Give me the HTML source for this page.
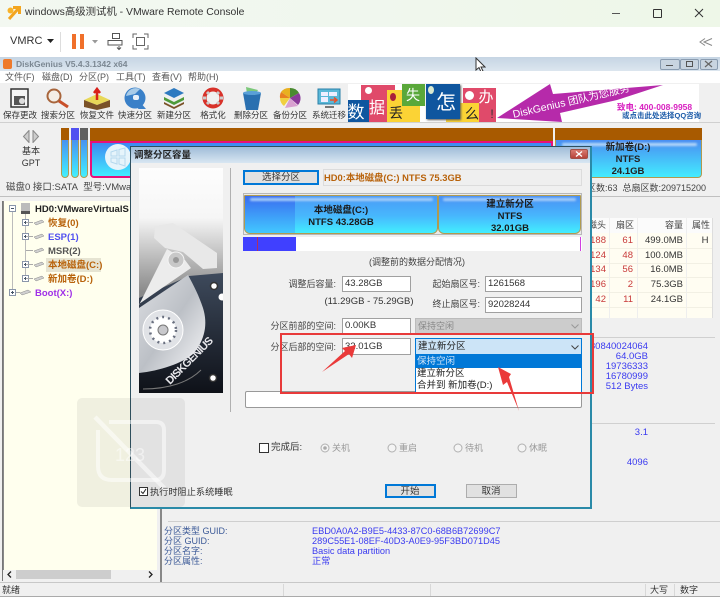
<!DOCTYPE html>
<html lang="zh"><head><meta charset="utf-8"><title>windows高级测试机 - VMware Remote Console</title>
<style>
html,body{margin:0;padding:0;background:#fff}
#r{position:relative;width:720px;height:597px;overflow:hidden;background:#f0f0f0;font-family:"Liberation Sans","Noto Sans CJK SC",sans-serif;font-size:9.5px;color:#222;filter:blur(.3px)}
#r div,#r span.a,#r svg{position:absolute}
.t{position:absolute;white-space:nowrap;line-height:12px;height:12px}
.c{transform:translateX(-50%);text-align:center}
.rt{transform:translateX(-100%);text-align:right}
.b{font-weight:bold}
.in{background:#fff;border:1px solid #a0a0a0;box-sizing:border-box;line-height:14px;padding-left:2px;white-space:nowrap;color:#333}
.blue{color:#3a3af0}
.red{color:#c83a3a}
</style></head><body><div id="r">

<!-- window title -->
<div style="left:0;top:0;width:720px;height:27px;background:linear-gradient(90deg,#f3f8f1,#f0f7ee 50%,#eef7e8)"></div>
<svg style="left:6px;top:5px" width="16" height="16" viewBox="0 0 16 16"><circle cx="4.500" cy="5.500" r="3" fill="#f7b22a"/><path d="M3 14 12 4M7 2.500H13.500V9" stroke="#f3a51f" stroke-width="3" fill="none"/></svg>
<span class="t" style="left:25px;top:6px;font-size:10.400px;line-height:14px;height:14px;color:#333">windows高级测试机 - VMware Remote Console</span>
<div style="left:612px;top:13px;width:8px;height:1px;background:#555"></div>
<div style="left:653px;top:9px;width:7px;height:7px;border:1px solid #333;border-radius:1px"></div>
<svg style="left:694px;top:8px" width="10" height="10"><path d="M1 1 9 9M9 1 1 9" stroke="#333" stroke-width="1"/></svg>

<!-- vmrc toolbar -->
<div style="left:0;top:27px;width:720px;height:30px;background:#fff"></div>
<span class="t" style="left:10px;top:34px;font-size:11px;line-height:14px;height:14px;color:#333">VMRC</span>
<svg style="left:47px;top:39px" width="7" height="4"><path d="M0 0H7L3.500 4Z" fill="#222"/></svg>
<div style="left:60px;top:32px;width:1px;height:20px;background:#ddd"></div>
<div style="left:72px;top:34px;width:4px;height:15px;background:#f0702a"></div>
<div style="left:80px;top:34px;width:4px;height:15px;background:#f0702a"></div>
<svg style="left:92px;top:40px" width="6" height="4"><path d="M0 0H6L3 3.500Z" fill="#999"/></svg>
<svg style="left:107px;top:33px" width="18" height="18" fill="none" stroke="#555" stroke-width="1"><rect x="5.500" y=".5" width="7" height="5"/><rect x="1" y="7.500" width="14" height="4.500"/><path d="M12 13V16M10 14.500 12 16.500 14 14.500"/></svg>
<svg style="left:132px;top:33px" width="18" height="18" fill="none" stroke="#666" stroke-width="1"><path d="M1 5V1H5M12 1H16V5M16 12V16H12M5 16H1V12"/><rect x="4.500" y="4.500" width="8" height="8"/></svg>
<svg style="left:699px;top:38px" width="14" height="8" fill="none" stroke="#888" stroke-width="1"><path d="M6 .5 1 4 6 7.500M13 .5 5 4 13 7.500"/></svg>

<!-- DG title -->
<div style="left:0;top:57px;width:720px;height:14px;background:linear-gradient(#c6d5e4,#dce6ef)"></div>
<div style="left:3px;top:59px;width:9px;height:10px;background:#ee7a2c;border-radius:2px"></div>
<span class="t b" style="left:16px;top:58px;font-size:8.500px;color:#7b8792">DiskGenius V5.4.3.1342 x64</span>
<div style="left:660px;top:59px;width:18px;height:9px;background:#c8d4e0;border:1px solid #8a9cb0;border-radius:2px"></div>
<div style="left:680px;top:59px;width:17px;height:9px;background:#c8d4e0;border:1px solid #8a9cb0;border-radius:2px"></div>
<div style="left:700px;top:59px;width:16px;height:9px;background:#c8d4e0;border:1px solid #8a9cb0;border-radius:2px"></div>
<div style="left:666px;top:65px;width:7px;height:1px;background:#555"></div>
<div style="left:686px;top:61px;width:5px;height:4px;border:1px solid #555"></div>
<svg style="left:704px;top:60px" width="9" height="8"><path d="M1 1 8 7M8 1 1 7" stroke="#666" stroke-width="1.200"/></svg>
<svg style="left:475px;top:57px" width="11" height="16"><path d="M1 1V13L4 10.500 6 15 8 14 6 10H10Z" fill="#fff" stroke="#333" stroke-width="1"/></svg>

<!-- menu -->
<div style="left:0;top:71px;width:720px;height:12px;background:#fff"></div>
<span class="t" style="left:5px;top:71px;font-size:9px;color:#555">文件(F)</span>
<span class="t" style="left:42px;top:71px;font-size:9px;color:#555">磁盘(D)</span>
<span class="t" style="left:79px;top:71px;font-size:9px;color:#555">分区(P)</span>
<span class="t" style="left:116px;top:71px;font-size:9px;color:#555">工具(T)</span>
<span class="t" style="left:152px;top:71px;font-size:9px;color:#555">查看(V)</span>
<span class="t" style="left:188px;top:71px;font-size:9px;color:#555">帮助(H)</span>

<!-- toolbar -->
<div style="left:0;top:83px;width:720px;height:40px;background:#f0f0f0;border-bottom:1px solid #d0d0d0;box-sizing:border-box"></div>
<svg style="left:0;top:84px" width="348" height="26" viewBox="0 0 348 26">
 <rect x="11" y="5" width="17" height="18" fill="#f4f4f4" stroke="#333" stroke-width="1.500"/><rect x="14" y="12" width="11" height="9" fill="#555"/><circle cx="22" cy="17" r="3" fill="#ddd"/>
 <circle cx="54" cy="12" r="6.500" fill="#f4eee6" stroke="#a8653c" stroke-width="2"/><path d="M59 17 68 23" stroke="#c8502a" stroke-width="3"/>
 <path d="M84 16 97 10 110 16 97 21Z" fill="#e8d858"/><path d="M84 16V23L97 26 110 23V16L97 21Z" fill="#7a5228"/><path d="M97 16V8M94 9 97 5 100 9" stroke="#d8201a" stroke-width="2.500" fill="#d8201a"/>
 <circle cx="135" cy="14" r="10.500" fill="#3a80c8"/><path d="M126 12A10 10 0 0 1 140 5L135 10Z" fill="#a8cbe8"/><rect x="133" y="11" width="6" height="5" rx="2" fill="#e8f0f8"/><path d="M140 18 146 25H138Z" fill="#3a80c8"/>
 <path d="M164 9 174 4 184 9 174 14Z" fill="#2e7ac0"/><path d="M164 13 174 18 184 13 184 16 174 21 164 16Z" fill="#4e9a3a"/><path d="M164 18 174 23 184 18 184 20 174 25 164 20Z" fill="#7a5228"/>
 <circle cx="213" cy="14" r="8.500" fill="none" stroke="#d8322a" stroke-width="4"/><path d="M207 8 209 10M219 8 217 10M207 20 209 18M219 20 217 18M203 14H206M220 14H223" stroke="#ccc" stroke-width="3"/>
 <path d="M243 9H261L258 26H246Z" fill="#2a70b0"/><path d="M246 3 258 6 255 11 247 10Z" fill="#7cc87a"/><ellipse cx="252" cy="9" rx="9" ry="2" fill="#5aa0d8"/>
 <path d="M290 14V4A10 10 0 0 1 299 9Z" fill="#4a8a30"/><path d="M290 14 281 8A10 10 0 0 1 290 4Z" fill="#e8b020"/><path d="M290 14H280A10 10 0 0 1 281 8Z" fill="#e88020"/><path d="M290 14 284 22A10 10 0 0 1 280 14Z" fill="#f0d040"/><path d="M290 14 298 22 285 24Z" fill="#d8a0d0"/><path d="M290 14 299 9A10 10 0 0 1 298 21Z" fill="#8a3a9a"/>
 <rect x="318" y="5" width="22" height="15" fill="#5ab8d8" stroke="#2a80a8"/><rect x="321" y="8" width="7" height="4" fill="#eef"/><rect x="329" y="8" width="8" height="4" fill="#eef"/><rect x="321" y="13" width="7" height="5" fill="#eef"/><path d="M330 16H336M334 13.500 337 16 334 18.500" stroke="#e8502a" stroke-width="1.500" fill="none"/><path d="M325 23H334" stroke="#777" stroke-width="2"/>
</svg>
<span class="t c" style="left:20px;top:109px;font-size:8.500px;color:#333">保存更改</span>
<span class="t c" style="left:58px;top:109px;font-size:8.500px;color:#333">搜索分区</span>
<span class="t c" style="left:97px;top:109px;font-size:8.500px;color:#333">恢复文件</span>
<span class="t c" style="left:135px;top:109px;font-size:8.500px;color:#333">快速分区</span>
<span class="t c" style="left:174px;top:109px;font-size:8.500px;color:#333">新建分区</span>
<span class="t c" style="left:213px;top:109px;font-size:8.500px;color:#333">格式化</span>
<span class="t c" style="left:251px;top:109px;font-size:8.500px;color:#333">删除分区</span>
<span class="t c" style="left:290px;top:109px;font-size:8.500px;color:#333">备份分区</span>
<span class="t c" style="left:329px;top:109px;font-size:8.500px;color:#333">系统迁移</span>

<!-- banner -->
<div style="left:348px;top:84px;width:351px;height:38px;background:#fff;overflow:hidden">
 <div style="left:13px;top:1px;width:34px;height:37px;background:#e04a6a"></div>
 <div style="left:17px;top:3px;width:7px;height:7px;background:#fff;border-radius:50%"></div>
 <div style="left:0;top:16px;width:21px;height:22px;background:#0f569f"></div>
 <span class="t c" style="left:8px;top:19px;font-size:17px;line-height:20px;height:20px;color:#fff">数</span>
 <span class="t c" style="left:29px;top:15px;font-size:16px;line-height:20px;height:20px;color:#fff">据</span>
 <div style="left:39px;top:6px;width:33px;height:32px;background:#fbd335"></div>
 <div style="left:42px;top:9px;width:6px;height:8px;background:#a8203a;border-radius:50%"></div>
 <span class="t c" style="left:48px;top:20px;font-size:14px;line-height:18px;height:18px;color:#222">丢</span>
 <div style="left:54px;top:0;width:23px;height:22px;background:#5aa83a"></div>
 <span class="t c" style="left:65px;top:2px;font-size:14px;line-height:18px;height:18px;color:#fff">失</span>
 <div style="left:115px;top:4px;width:33px;height:34px;background:#e04a6a"></div>
 <div style="left:98px;top:19px;width:33px;height:19px;background:#fbd335"></div>
 <div style="left:78px;top:0;width:34px;height:35px;background:#0f569f;box-shadow:1px 1px 2px #555"></div>
 <div style="left:80px;top:2px;width:6px;height:8px;background:#d8e8d0;border-radius:50%"></div>
 <span class="t c" style="left:98px;top:7px;font-size:20px;line-height:24px;height:24px;color:#fff">怎</span>
 <span class="t c" style="left:124px;top:21px;font-size:14px;line-height:18px;height:18px;color:#222">么</span>
 <div style="left:117px;top:7px;width:9px;height:9px;background:#fff;border-radius:50%"></div>
 <span class="t c" style="left:138px;top:5px;font-size:15px;line-height:18px;height:18px;color:#fff">办</span>
 <span class="t c" style="left:144px;top:23px;font-size:12px;line-height:14px;height:14px;color:#333">!</span>
</div>
<svg style="left:490px;top:84px" width="180" height="38"><path d="M7 34 60 0 63 10 173 1 127 16 70 29 72 38Z" fill="#b62aaa"/></svg>
<span class="t" style="left:513px;top:109px;font-size:10.500px;color:#fff;transform:rotate(-13deg);transform-origin:0 50%">DiskGenius 团队为您服务</span>
<span class="t b" style="left:617px;top:101px;font-size:8.500px;color:#d820c0">致电: 400-008-9958</span>
<span class="t b" style="left:622px;top:110px;font-size:7.500px;color:#1a5aa8">或点击此处选择QQ咨询</span>

<!-- disk bar -->
<svg style="left:22px;top:130px" width="18" height="13" fill="#ccc" stroke="#888"><path d="M7 .5 1.500 6.500 7 12.500V.5ZM11 .5 16.500 6.500 11 12.500Z"/></svg>
<span class="t c" style="left:31px;top:145px;font-size:9px;color:#333">基本</span>
<span class="t c" style="left:31px;top:157px;font-size:9px;color:#333">GPT</span>
<div style="left:61px;top:128px;width:8px;height:50px;border-radius:2px 2px 4px 4px;background:linear-gradient(#4a8ff0 20%,#40f0ff);border:1px solid #b09a50;box-sizing:border-box"></div>
<div style="left:61px;top:128px;width:8px;height:12px;background:#a85a00"></div>
<div style="left:71px;top:128px;width:8px;height:50px;border-radius:2px 2px 4px 4px;background:linear-gradient(#4a8ff0 20%,#40f0ff);border:1px solid #b09a50;box-sizing:border-box"></div>
<div style="left:71px;top:128px;width:8px;height:12px;background:#5050f0"></div>
<div style="left:80px;top:128px;width:8px;height:50px;border-radius:2px 2px 4px 4px;background:linear-gradient(#4a8ff0 20%,#40f0ff);border:1px solid #b09a50;box-sizing:border-box"></div>
<div style="left:80px;top:128px;width:8px;height:12px;background:#606060"></div>
<div style="left:90px;top:128px;width:463px;height:13px;background:#a85a00"></div>
<div style="left:90px;top:141px;width:463px;height:37px;box-sizing:border-box;border:2px solid #e8107a;background:linear-gradient(#3d88f2,#43ecff);border-radius:0 0 4px 4px"></div>
<svg style="left:104px;top:143px" width="28" height="28"><circle cx="14" cy="14" r="13" fill="#e6f4fb"/><path d="M7 9 13 7V13H7ZM15 6.500 21 5V13H15ZM7 15H13V21L7 19ZM15 15H21V23L15 21Z" fill="none" stroke="#b5d8ee"/></svg>
<div style="left:555px;top:128px;width:147px;height:50px;box-sizing:border-box;border:1px solid #b09a50;border-radius:2px 2px 4px 4px;background:linear-gradient(#4a90f2 25%,#43ecff)"></div>
<div style="left:555px;top:128px;width:147px;height:12px;background:#a85a00"></div>
<div style="left:562px;top:143px;width:135px;height:3px;background:#b8d8f8;border-radius:2px;filter:blur(1px)"></div>
<span class="t c b" style="left:628px;top:142px;font-size:9.500px;color:#222">新加卷(D:)</span>
<span class="t c b" style="left:628px;top:154px;font-size:9.500px;color:#222">NTFS</span>
<span class="t c b" style="left:628px;top:166px;font-size:9.500px;color:#222">24.1GB</span>

<!-- info -->
<span class="t" style="left:6px;top:182px;font-size:9.500px;color:#444">磁盘0 接口:SATA&nbsp; 型号:VMware</span>
<span class="t rt" style="left:706px;top:182px;font-size:9px;color:#444">区数:63&nbsp; 总扇区数:209715200</span>
<div style="left:0;top:196px;width:720px;height:1px;background:#c0c0c0"></div>

<!-- tree -->
<div style="left:3px;top:201px;width:153px;height:369px;background:#ffffee;border-left:1px solid #888"></div>
<div style="left:2px;top:201px;width:1px;height:380px;background:#777"></div>
<div style="left:12px;top:209px;width:1px;height:84px;border-left:1px solid #bbb"></div>
<div style="left:25px;top:212px;width:1px;height:67px;border-left:1px solid #bbb"></div>
<svg style="left:0;top:200px" width="130" height="100">
 <g fill="#fff" stroke="#8a96aa"><rect x="9.500" y="5.500" width="6" height="6"/><rect x="22.500" y="19.500" width="6" height="6"/><rect x="22.500" y="33.500" width="6" height="6"/><rect x="22.500" y="61.500" width="6" height="6"/><rect x="22.500" y="75.500" width="6" height="6"/><rect x="9.500" y="89.500" width="6" height="6"/></g>
 <path d="M11 8.500H14M24 22.500H27M25.500 21V24M24 36.500H27M25.500 35V38M24 64.500H27M25.500 63V66M24 78.500H27M25.500 77V80M11 92.500H14M12.500 91V94" stroke="#456"/>
 <rect x="21" y="3" width="9" height="11" fill="#bbb"/><rect x="21" y="11" width="9" height="3" fill="#555"/>
 <g fill="#d0d0d0" stroke="#888" stroke-width=".5"><path d="M34 23 42 20 44 22 36 25Z"/><path d="M34 37 42 34 44 36 36 39Z"/><path d="M34 51 42 48 44 50 36 53Z"/><path d="M34 65 42 62 44 64 36 67Z"/><path d="M34 79 42 76 44 78 36 81Z"/><path d="M20 93 28 90 31 92 22 95Z"/></g>
 <path d="M26 22.500H33M26 36.500H33M26 50.500H33M26 64.500H33M26 78.500H33M16 92.500H20" stroke="#aaa"/>
</svg>
<div style="left:46px;top:258px;width:55px;height:14px;background:#e6e4d2"></div>
<span class="t b" style="left:35px;top:204px;font-size:9.500px;color:#222">HD0:VMwareVirtualS</span>
<span class="t b" style="left:48px;top:218px;font-size:9.500px;color:#b8620a">恢复(0)</span>
<span class="t b" style="left:48px;top:232px;font-size:9.500px;color:#5050f0">ESP(1)</span>
<span class="t b" style="left:48px;top:246px;font-size:9.500px;color:#555">MSR(2)</span>
<span class="t b" style="left:48px;top:260px;font-size:9.500px;color:#b8620a">本地磁盘(C:)</span>
<span class="t b" style="left:48px;top:274px;font-size:9.500px;color:#b8620a">新加卷(D:)</span>
<span class="t b" style="left:35px;top:288px;font-size:9.500px;color:#a030e8">Boot(X:)</span>
<div style="left:4px;top:570px;width:152px;height:10px;background:#f0f0f0"></div>
<div style="left:16px;top:570px;width:95px;height:9px;background:#cdcdcd"></div>
<svg style="left:7px;top:571px" width="5" height="7"><path d="M4 .5 1 3.500 4 6.500" fill="none" stroke="#222" stroke-width="1.300"/></svg>
<svg style="left:148px;top:571px" width="5" height="7"><path d="M1 .5 4 3.500 1 6.500" fill="none" stroke="#222" stroke-width="1.300"/></svg>

<!-- right panel table -->
<div style="left:591px;top:201px;width:129px;height:380px;background:#f0f0f0"></div>
<div style="left:591px;top:218px;width:121px;height:100px;background:#fffdf2"></div>
<div style="left:591px;top:218px;width:121px;height:15px;background:#fbfbfb"></div>
<div style="left:609px;top:218px;width:1px;height:100px;background:#eee"></div>
<div style="left:637px;top:218px;width:1px;height:100px;background:#eee"></div>
<div style="left:686px;top:218px;width:1px;height:100px;background:#eee"></div>
<div style="left:712px;top:218px;width:1px;height:100px;background:#ddd"></div>
<div style="left:591px;top:248px;width:121px;height:1px;background:#f2f0e4"></div>
<div style="left:591px;top:263px;width:121px;height:1px;background:#f2f0e4"></div>
<div style="left:591px;top:277px;width:121px;height:1px;background:#f2f0e4"></div>
<div style="left:591px;top:292px;width:121px;height:1px;background:#f2f0e4"></div>
<div style="left:591px;top:307px;width:121px;height:1px;background:#f2f0e4"></div>
<span class="t rt" style="left:606px;top:219px;font-size:9px;color:#444">磁头</span>
<span class="t c" style="left:625px;top:219px;font-size:9px;color:#444">扇区</span>
<span class="t rt" style="left:683px;top:219px;font-size:9px;color:#444">容量</span>
<span class="t c" style="left:701px;top:219px;font-size:9px;color:#444">属性</span>
<span class="t rt red" style="left:606px;top:235px">188</span><span class="t rt red" style="left:633px;top:235px">61</span><span class="t rt" style="left:683px;top:235px;color:#333">499.0MB</span><span class="t c" style="left:705px;top:235px;color:#333">H</span>
<span class="t rt red" style="left:606px;top:250px">124</span><span class="t rt red" style="left:633px;top:250px">48</span><span class="t rt" style="left:683px;top:250px;color:#333">100.0MB</span>
<span class="t rt red" style="left:606px;top:264px">134</span><span class="t rt red" style="left:633px;top:264px">56</span><span class="t rt" style="left:683px;top:264px;color:#333">16.0MB</span>
<span class="t rt red" style="left:606px;top:279px">196</span><span class="t rt red" style="left:633px;top:279px">2</span><span class="t rt" style="left:683px;top:279px;color:#333">75.3GB</span>
<span class="t rt red" style="left:606px;top:294px">42</span><span class="t rt red" style="left:633px;top:294px">11</span><span class="t rt" style="left:683px;top:294px;color:#333">24.1GB</span>
<div style="left:591px;top:337px;width:124px;height:1px;background:#d0d0d0"></div>
<span class="t rt blue" style="left:648px;top:341px">80840024064</span>
<span class="t rt blue" style="left:648px;top:351px">64.0GB</span>
<span class="t rt blue" style="left:648px;top:361px">19736333</span>
<span class="t rt blue" style="left:648px;top:371px">16780999</span>
<span class="t rt blue" style="left:648px;top:381px">512 Bytes</span>
<div style="left:591px;top:423px;width:124px;height:1px;background:#d0d0d0"></div>
<span class="t rt blue" style="left:648px;top:427px">3.1</span>
<span class="t rt blue" style="left:648px;top:457px">4096</span>

<!-- bottom details -->
<div style="left:160px;top:508px;width:2px;height:74px;background:#888"></div>
<div style="left:168px;top:521px;width:552px;height:1px;background:#cfcfcf"></div>
<span class="t" style="left:164px;top:525px;font-size:9px;color:#3c5a98">分区类型 GUID:</span>
<span class="t" style="left:164px;top:535px;font-size:9px;color:#3c5a98">分区 GUID:</span>
<span class="t" style="left:164px;top:545px;font-size:9px;color:#3c5a98">分区名字:</span>
<span class="t" style="left:164px;top:555px;font-size:9px;color:#3c5a98">分区属性:</span>
<span class="t blue" style="left:312px;top:525px;font-size:9.200px">EBD0A0A2-B9E5-4433-87C0-68B6B72699C7</span>
<span class="t blue" style="left:312px;top:535px;font-size:9.200px">289C55E1-08EF-40D3-A0E9-95F3BD071D45</span>
<span class="t blue" style="left:312px;top:545px;font-size:9.200px">Basic data partition</span>
<span class="t blue" style="left:312px;top:555px;font-size:9.200px">正常</span>

<!-- status bar -->
<div style="left:0;top:582px;width:720px;height:1px;background:#c8c8c8"></div>
<div style="left:0;top:596px;width:720px;height:1px;background:#aaa"></div>
<div style="left:283px;top:584px;width:1px;height:12px;background:#d8d8d8"></div>
<div style="left:430px;top:584px;width:1px;height:12px;background:#d8d8d8"></div>
<div style="left:645px;top:584px;width:1px;height:12px;background:#d8d8d8"></div>
<div style="left:674px;top:584px;width:1px;height:12px;background:#d8d8d8"></div>
<span class="t" style="left:2px;top:584px;font-size:9px;color:#333">就绪</span>
<span class="t" style="left:650px;top:584px;font-size:9px;color:#333">大写</span>
<span class="t" style="left:680px;top:584px;font-size:9px;color:#333">数字</span>

<!-- DIALOG -->
<div style="left:130px;top:146px;width:462px;height:363px;background:#f0f0f0;border:1px solid #2e5060;border-right:2px solid #2a8aa8;border-bottom:2px solid #2a8aa8;box-sizing:border-box"></div>
<div style="left:131px;top:147px;width:459px;height:16px;background:linear-gradient(#9fbcd8,#d8e6f2)"></div>
<span class="t b" style="left:134px;top:150px;font-size:9.500px;color:#222">调整分区容量</span>
<div style="left:570px;top:149px;width:18px;height:10px;background:linear-gradient(#d87a70,#b8433a);border-radius:2px;border:1px solid #a05048;box-sizing:border-box"></div>
<svg style="left:575px;top:151px" width="8" height="6"><path d="M1 .5 7 5.500M7 .5 1 5.500" stroke="#fff" stroke-width="1.300"/></svg>

<svg style="left:139px;top:168px" width="84" height="225" viewBox="0 0 84 225">
 <defs>
  <linearGradient id="g1" x1="0" y1="0" x2="0" y2="1"><stop offset="0" stop-color="#fdfdfd"/><stop offset=".22" stop-color="#f6f6f6"/><stop offset=".42" stop-color="#b4b4b4"/><stop offset=".55" stop-color="#8a8a8a"/></linearGradient>
  <linearGradient id="g2" x1="0" y1="0" x2="1" y2="1"><stop offset="0" stop-color="#dcdee2"/><stop offset=".5" stop-color="#bcc0c6"/><stop offset="1" stop-color="#f8f8fa"/></linearGradient>
  <linearGradient id="g3" x1="0" y1="0" x2="0" y2="1"><stop offset="0" stop-color="#3e4a5c"/><stop offset="1" stop-color="#0e1118"/></linearGradient>
 </defs>
 <rect width="84" height="225" fill="url(#g1)"/>
 <path d="M0 130 50 108 84 105V225H0Z" fill="url(#g3)"/>
 <path d="M0 140 49 107C55 118 60 128 64 140 69 156 66 172 54 186 44 195 20 203 0 205Z" fill="url(#g2)"/>
 <path d="M16 58 34 55 78 85 78 100 64 101 44 84 26 80 15 70Z" fill="#e8e8e8"/>
 <path d="M0 137 28 81 46 92 52 100 0 136Z" fill="#ececec"/>
 <circle cx="37" cy="92" r="8" fill="#c8c8c8" stroke="#f4f4f4"/><circle cx="37" cy="92" r="3" fill="#999"/>
 <circle cx="24" cy="162" r="20" fill="#e0e2e6" stroke="#fff"/><circle cx="24" cy="162" r="13" fill="#fff" stroke="#6a7080" stroke-dasharray="2 4" stroke-width="2.500"/><circle cx="24" cy="162" r="5" fill="#c8c8cc" stroke="#777"/>
 <circle cx="75" cy="118" r="3.500" fill="#fff" stroke="#333" stroke-width="1.500"/><circle cx="83" cy="129" r="3.500" fill="#fff"/><circle cx="74" cy="210" r="3.500" fill="#fff" stroke="#333" stroke-width="1.500"/>
 <path d="M4 221C30 221 50 214 62 202" stroke="#777" fill="none"/>
 <text x="31" y="217" transform="rotate(-45 31 217)" font-family="Liberation Sans,sans-serif" font-size="11" font-weight="bold" fill="#e8e8ec" textLength="62">DISKGENIUS</text>
</svg>
<div style="left:230px;top:168px;width:1px;height:244px;background:#b0b0b0"></div>

<div style="left:243px;top:170px;width:76px;height:15px;box-sizing:border-box;border:1px solid #0078d7;box-shadow:inset 0 0 0 1px #0078d7;background:#e1e1e1"></div>
<span class="t c" style="left:281px;top:172px;font-size:9.500px;color:#333">选择分区</span>
<div style="left:323px;top:169px;width:259px;height:17px;box-sizing:border-box;border:1px solid #dcdcdc;background:#efefef"></div>
<span class="t b" style="left:324px;top:172px;font-size:9.400px;color:#b8620a">HD0:本地磁盘(C:) NTFS 75.3GB</span>

<div style="left:243px;top:193px;width:339px;height:42px;background:#eaeaea;border:1px solid #b8b8b8;box-sizing:border-box"></div>
<div style="left:244px;top:195px;width:194px;height:39px;box-sizing:border-box;border:1px solid #b09a50;border-radius:1px 1px 6px 6px;background:linear-gradient(#4a9af6,#47b8fd 55%,#42eeff)"></div>
<div style="left:245px;top:196px;width:50px;height:37px;background:linear-gradient(#3a6cf0,#42c8ff);border-radius:0 0 0 5px"></div>
<div style="left:438px;top:195px;width:143px;height:39px;box-sizing:border-box;border:1px solid #b09a50;border-radius:1px 1px 6px 6px;background:linear-gradient(#4a90f4,#47b8fd 55%,#42eeff)"></div>
<div style="left:250px;top:198px;width:183px;height:3px;background:#a8cff8;border-radius:2px;filter:blur(1px)"></div>
<div style="left:443px;top:198px;width:133px;height:3px;background:#a8cff8;border-radius:2px;filter:blur(1px)"></div>
<span class="t c b" style="left:341px;top:205px;font-size:9.500px;color:#1a1a1a">本地磁盘(C:)</span>
<span class="t c b" style="left:341px;top:217px;font-size:9.500px;color:#1a1a1a">NTFS 43.28GB</span>
<span class="t c b" style="left:510px;top:199px;font-size:9.500px;color:#1a1a1a">建立新分区</span>
<span class="t c b" style="left:510px;top:211px;font-size:9.500px;color:#1a1a1a">NTFS</span>
<span class="t c b" style="left:510px;top:223px;font-size:9.500px;color:#1a1a1a">32.01GB</span>

<div style="left:243px;top:237px;width:339px;height:14px;background:#fff"></div>
<div style="left:243px;top:237px;width:53px;height:14px;background:#4040ff"></div>
<div style="left:257px;top:237px;width:1px;height:14px;background:#b03060"></div>
<div style="left:580px;top:237px;width:1px;height:14px;background:#d040e0"></div>

<span class="t c" style="left:417px;top:256px;font-size:9px;color:#444">(调整前的数据分配情况)</span>

<span class="t rt" style="left:336px;top:278px;font-size:9px;color:#444">调整后容量:</span>
<div class="in" style="left:342px;top:276px;width:69px;height:16px">43.28GB</div>
<span class="t rt" style="left:480px;top:278px;font-size:9px;color:#444">起始扇区号:</span>
<div class="in" style="left:485px;top:276px;width:97px;height:16px">1261568</div>
<span class="t c" style="left:369px;top:296px;color:#333">(11.29GB - 75.29GB)</span>
<span class="t rt" style="left:480px;top:298px;font-size:9px;color:#444">终止扇区号:</span>
<div class="in" style="left:485px;top:297px;width:97px;height:16px">92028244</div>
<span class="t rt" style="left:336px;top:320px;font-size:9px;color:#444">分区前部的空间:</span>
<div class="in" style="left:342px;top:318px;width:69px;height:16px">0.00KB</div>
<div style="left:415px;top:318px;width:167px;height:16px;background:#cccccc;border:1px solid #bbb;box-sizing:border-box"></div>
<span class="t" style="left:418px;top:320px;font-size:9px;color:#888">保持空闲</span>
<svg style="left:571px;top:324px" width="8" height="5"><path d="M.5 .5 4 4 7.500 .5" fill="none" stroke="#999"/></svg>
<span class="t rt" style="left:336px;top:341px;font-size:9px;color:#444">分区后部的空间:</span>
<div class="in" style="left:342px;top:338px;width:69px;height:17px;line-height:15px">32.01GB</div>
<div style="left:415px;top:338px;width:167px;height:17px;background:#cce4f7;border:1px solid #0078d7;box-sizing:border-box"></div>
<span class="t" style="left:418px;top:341px;font-size:9.500px;color:#222">建立新分区</span>
<svg style="left:571px;top:345px" width="8" height="5"><path d="M.5 .5 4 4 7.500 .5" fill="none" stroke="#444"/></svg>

<div style="left:245px;top:391px;width:337px;height:17px;background:#fff;border:1px solid #999;border-radius:2px;box-sizing:border-box"></div>
<div style="left:415px;top:355px;width:167px;height:38px;background:#fff;border:1px solid #0078d7;box-sizing:border-box"></div>
<div style="left:416px;top:355px;width:165px;height:13px;background:#0078d7"></div>
<span class="t" style="left:417px;top:356px;font-size:9.500px;color:#cfe4f8">保持空闲</span>
<span class="t" style="left:417px;top:368px;font-size:9.500px;color:#222">建立新分区</span>
<span class="t" style="left:417px;top:380px;font-size:9.500px;color:#222">合并到 新加卷(D:)</span>

<!-- after -->
<div style="left:259px;top:443px;width:10px;height:10px;background:#fff;border:1px solid #333;box-sizing:border-box"></div>
<span class="t" style="left:271px;top:442px;font-size:9.500px;color:#333">完成后:</span>
<svg style="left:0;top:440px" width="560" height="16" fill="#f4f4f4" stroke="#b0b0b0"><circle cx="325" cy="8" r="4"/><circle cx="392" cy="8" r="4"/><circle cx="458" cy="8" r="4"/><circle cx="522" cy="8" r="4"/><circle cx="325" cy="8" r="1.800" fill="#aaa" stroke="none"/></svg>
<span class="t" style="left:332px;top:442px;font-size:9px;color:#999">关机</span>
<span class="t" style="left:399px;top:442px;font-size:9px;color:#999">重启</span>
<span class="t" style="left:465px;top:442px;font-size:9px;color:#999">待机</span>
<span class="t" style="left:529px;top:442px;font-size:9px;color:#999">休眠</span>
<div style="left:385px;top:484px;width:51px;height:14px;background:#e1e1e1;border:1px solid #0078d7;box-shadow:inset 0 0 0 1px #0078d7;box-sizing:border-box"></div>
<span class="t c" style="left:410px;top:486px;font-size:9.500px;color:#333">开始</span>
<div style="left:466px;top:484px;width:51px;height:14px;background:#e1e1e1;border:1px solid #adadad;box-sizing:border-box"></div>
<span class="t c" style="left:491px;top:486px;font-size:9.500px;color:#333">取消</span>

<!-- watermark -->
<div style="left:77px;top:398px;width:108px;height:109px;background:rgba(60,60,60,.075);border-radius:5px"></div>
<svg style="left:77px;top:398px" width="108" height="109" fill="none" stroke="#fff" stroke-opacity=".5" stroke-width="4"><path d="M21 32V68Q21 82 35 82H78Q87 82 87 72V32Q87 24 79 24H32"/><path d="M18 19 91 94" stroke-width="4.500"/></svg>
<span class="t" style="left:115px;top:444px;font-size:18px;line-height:22px;height:22px;color:#fff;opacity:.5">123</span>

<div style="left:139px;top:487px;width:9px;height:9px;background:#fff;border:1px solid #333;box-sizing:border-box"></div>
<svg style="left:140px;top:488px" width="7" height="7"><path d="M1 3.500 3 5.500 6 1" fill="none" stroke="#222"/></svg>
<span class="t" style="left:150px;top:486px;font-size:9.200px;color:#333">执行时阻止系统睡眠</span>

<!-- red annotations -->
<div style="left:280px;top:333px;width:314px;height:61px;box-sizing:border-box;border:2px solid #e83a3a"></div>
<svg style="left:0;top:0;overflow:visible" width="720" height="597"><path d="M322 372 345 351 342 348 356 345 352 358 349 354Z" fill="#ea3a3a"/><path d="M519 411 507 382 503 385 498 367 511 374 509 377Z" fill="#ea3a3a"/></svg>
</div></body></html>
